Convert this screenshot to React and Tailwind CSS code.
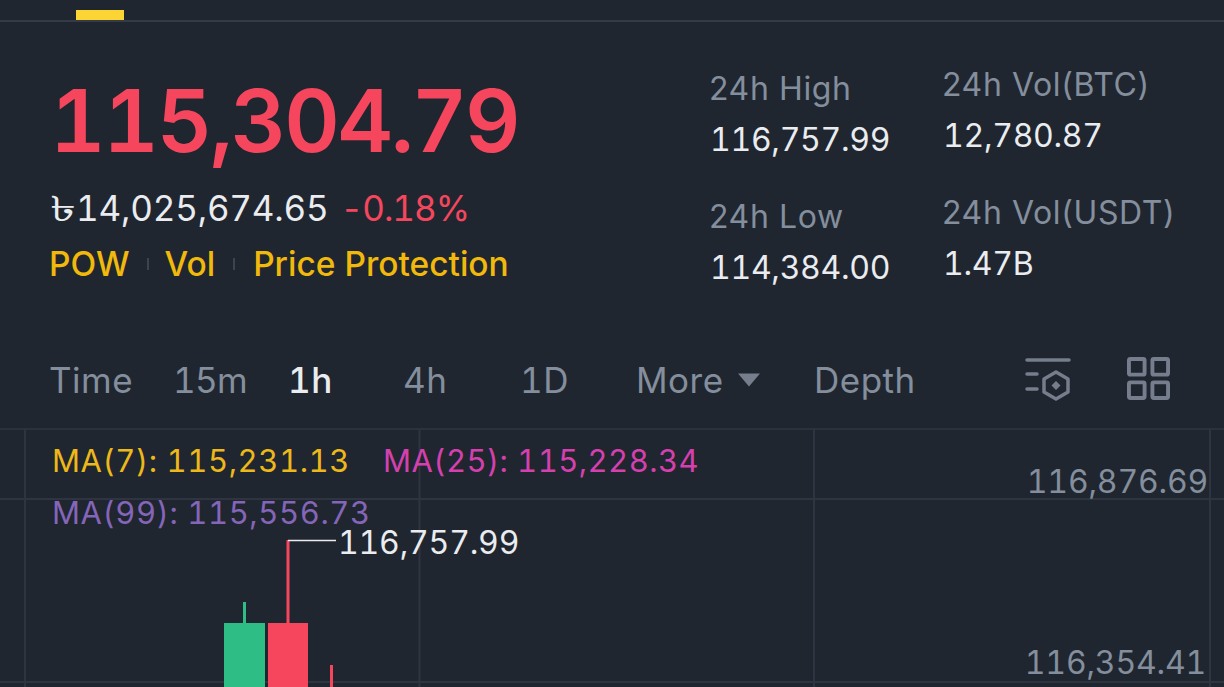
import React from "react";

function Stat({ label, value }) {
  return (
    <div className="flex flex-col">
      <span className="text-[32px] leading-[38px] tracking-[0.6px] text-[#848e9c] whitespace-nowrap">{label}</span>
      <span className="text-[32px] leading-[38px] mt-[13px] ml-[1px] tracking-[-0.3px] tabular-nums text-[#eaecef] whitespace-nowrap">{value}</span>
    </div>
  );
}

function Tab({ children, className = "" }) {
  return <span className={`text-[35px] leading-[40px] tracking-[0.5px] tabular-nums whitespace-nowrap ${className}`}>{children}</span>;
}

export default function App() {
  return (
    <div className="w-[1224px] h-[687px] overflow-hidden bg-[#1f2630] flex flex-col font-['Inter',sans-serif]">
      <div className="h-[22px] shrink-0 border-b-2 border-[#333b47] pl-[76px] pt-[10px]">
        <div className="w-[48px] h-[10px] bg-[#fcd535]" />
      </div>

      <div className="h-[318px] shrink-0 flex pl-[50px] pr-[50px]">
        <div className="w-[659px] shrink-0 flex flex-col">
          <div className="mt-[47px] text-[86px] leading-[104px] font-semibold tracking-[-2.3px] tabular-nums text-[#f6465d] whitespace-nowrap">115,304.79</div>
          <div className="mt-[14px] flex items-center text-[35px] leading-[42px] tabular-nums whitespace-nowrap">
            <span className="inline-block w-[26px] origin-left scale-x-[1.5] text-[#eaecef]">৳</span>
            <span className="text-[#eaecef] tracking-[-0.2px]">14,025,674.65</span>
            <span className="ml-[12px] tracking-[-1px] text-[#f6465d]">-0.18%</span>
          </div>
          <div className="mt-[15px] -ml-[1px] flex items-center text-[33.500px] leading-[40px] font-medium text-[#f0b90b] whitespace-nowrap">
            <span>POW</span>
            <span className="ml-[17px] mr-[16px] w-[2px] h-[12px] bg-[#3d4450]" />
            <span>Vol</span>
            <span className="mx-[18px] w-[2px] h-[12px] bg-[#3d4450]" />
            <span>Price Protection</span>
          </div>
        </div>
        <div className="w-[233px] shrink-0 flex flex-col pt-[48px] gap-[39px]">
          <Stat label="24h High" value="116,757.99" />
          <Stat label="24h Low" value="114,384.00" />
        </div>
        <div className="flex flex-col pt-[44px] gap-[39px]">
          <Stat label="24h Vol(BTC)" value="12,780.87" />
          <Stat label="24h Vol(USDT)" value="1.47B" />
        </div>
      </div>

      <div className="h-[88px] shrink-0 flex items-center pl-[49px] pb-[8px] text-[#848e9c]">
        <Tab className="w-[124px]">Time</Tab>
        <Tab className="w-[115px]"><span className="tracking-[-0.7px]">15m</span></Tab>
        <Tab className="w-[115px] font-medium text-[#eaecef]">1h</Tab>
        <Tab className="w-[117px]">4h</Tab>
        <Tab className="w-[116px]">1D</Tab>
        <Tab className="w-[178px] flex items-center">
          More
          <svg width="24" height="14" viewBox="0 0 24 14" className="ml-[13px]"><path d="M1 0.500h22L12 13.500z" fill="#767d8c" /></svg>
        </Tab>
        <Tab className="w-[211px]">Depth</Tab>
        <svg width="46" height="46" viewBox="0 0 46 46" fill="none" stroke="#767d8c" strokeWidth="3.500" strokeLinecap="round" strokeLinejoin="round">
          <path d="M2 3h42" />
          <path d="M2 17h10" />
          <path d="M2 32h10" />
          <path d="M31 15l12 7v13l-12 7-12-7V22z" />
          <path d="M31 24l4.500 4.500-4.500 4.500-4.500-4.500z" fill="#767d8c" stroke="none" />
        </svg>
        <svg width="43" height="43" viewBox="0 0 44 44" fill="none" stroke="#767d8c" strokeWidth="4" strokeLinejoin="round" className="ml-[56px] mb-[3px]">
          <rect x="2" y="2" width="16" height="16" rx="1.500" />
          <rect x="26" y="2" width="16" height="16" rx="1.500" />
          <rect x="2" y="26" width="16" height="16" rx="1.500" />
          <rect x="26" y="26" width="16" height="16" rx="1.500" />
        </svg>
      </div>

      <div className="relative flex-1 border-t-2 border-[#2b323d]">
        <svg width="1224" height="257" viewBox="0 0 1224 257" className="absolute inset-0">
          <g stroke="#2e3540" strokeWidth="2">
            <path d="M0 69H1224" />
            <path d="M0 252H1224" />
            <path d="M25 0V257" />
            <path d="M419.500 0V257" />
            <path d="M814 0V257" />
            <path d="M1210 0V257" />
          </g>
          <rect x="243" y="172" width="3" height="22" fill="#2ebd85" />
          <rect x="224" y="193" width="41" height="64" fill="#2ebd85" />
          <rect x="286.500" y="110" width="3" height="84" fill="#f6465d" />
          <rect x="268" y="193" width="40" height="64" fill="#f6465d" />
          <rect x="330" y="235" width="3" height="22" fill="#f6465d" />
          <path d="M288 110.500H336" stroke="#eaecef" strokeWidth="1.500" />
        </svg>
        <div className="absolute left-[52px] top-[12px] flex gap-[33px] text-[31px] leading-[38px] tabular-nums whitespace-nowrap">
          <span className="tracking-[0.6px] text-[#edb81a]">MA(7): 115,231.13</span>
          <span className="tracking-[0.45px] text-[#d540ae]">MA(25): 115,228.34</span>
        </div>
        <div className="absolute left-[52px] top-[64px] text-[31px] leading-[38px] tracking-[0.6px] tabular-nums text-[#8465b8] whitespace-nowrap">MA(99): 115,556.73</div>
        <div className="absolute left-[338px] top-[94px] text-[32px] leading-[38px] tracking-[-0.2px] tabular-nums text-[#eaecef] whitespace-nowrap">116,757.99</div>
        <div className="absolute right-[16px] top-[33px] text-[32px] leading-[38px] tracking-[-0.2px] tabular-nums text-[#848e9c] whitespace-nowrap">116,876.69</div>
        <div className="absolute right-[18px] top-[214px] text-[32px] leading-[38px] tracking-[-0.2px] tabular-nums text-[#848e9c] whitespace-nowrap">116,354.41</div>
      </div>
    </div>
  );
}
